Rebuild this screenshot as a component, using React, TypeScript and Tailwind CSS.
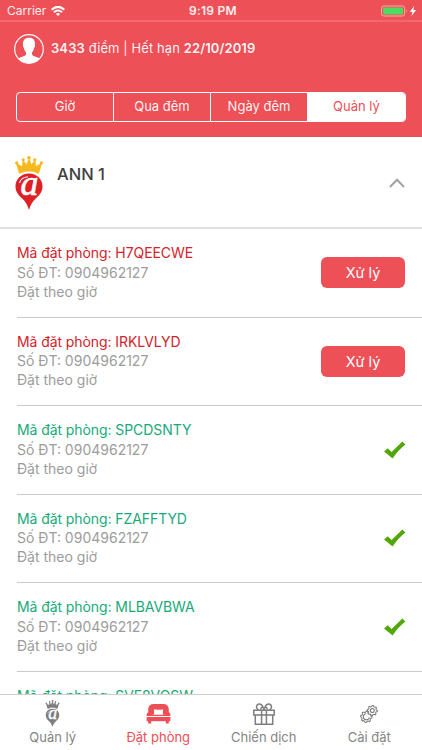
import React from "react";

type Booking = { code: string; done: boolean };

const bookings: Booking[] = [
  { code: "H7QEECWE", done: false },
  { code: "IRKLVLYD", done: false },
  { code: "SPCDSNTY", done: true },
  { code: "FZAFFTYD", done: true },
  { code: "MLBAVBWA", done: true },
  { code: "SVF8VQSW", done: true },
];

const segments = ["Giờ", "Qua đêm", "Ngày đêm", "Quản lý"];

function CrownPin({ crown, pin, className }: { crown: string; pin: string; className: string }) {
  return (
    <svg viewBox="0 0 28 54" className={className}>
      <path
        d="M4.4 17.4 L1.2 7.2 L7 10.4 L8.2 4.4 L11.6 8.8 L14 2.4 L16.4 8.8 L19.8 4.4 L21 10.4 L26.8 7.2 L23.6 17.4 Q14 12.8 4.4 17.4Z"
        fill={crown}
        stroke={crown}
        strokeWidth=".6"
      />
      <g fill={crown}>
        <circle cx="1.7" cy="6.8" r="1.6" />
        <circle cx="8.2" cy="3.8" r="1.6" />
        <circle cx="14" cy="1.8" r="1.8" />
        <circle cx="19.8" cy="3.8" r="1.6" />
        <circle cx="26.3" cy="6.8" r="1.6" />
      </g>
      <path
        d="M14 17.4 C6.2 17.4 .5 23 .5 30.4 C.5 35.9 3.6 39.1 7.2 42.4 C10.4 45.4 12.6 49 14 53.9 C15.4 49 17.6 45.4 20.8 42.4 C24.4 39.1 27.5 35.9 27.5 30.4 C27.5 23 21.8 17.4 14 17.4Z"
        fill={pin}
      />
      <text
        x="14.4"
        y="38.8"
        textAnchor="middle"
        fontFamily="Liberation Serif, serif"
        fontStyle="italic"
        fontWeight="400"
        fontSize="36"
        fill="#fff"
        stroke="#fff"
        strokeWidth=".6"
      >
        a
      </text>
      <path d="M4.4 27 Q6 21.4 13 20.8" fill="none" stroke="#fff" strokeWidth="1.1" />
    </svg>
  );
}

function StatusBar() {
  return (
    <div className="relative flex h-5 shrink-0 items-center justify-between pr-[5px] pl-[7px] text-[12px] leading-5 text-white/90">
      <div className="flex items-center gap-[5px] pt-[2px]">
        <span>Carrier</span>
        <svg viewBox="0 0 14 10" className="h-[10px] w-[14px]" fill="none" stroke="white" strokeWidth="2.1">
          <path d="M.7 3.7 Q7 -2 13.3 3.7" />
          <path d="M3 6.3 Q7 2.7 11 6.3" />
          <path d="M7 10 L4.9 7.9 Q7 6.2 9.1 7.9Z" fill="white" stroke="none" />
        </svg>
      </div>
      <span className="absolute top-[1px] left-[189px] font-semibold tracking-[0.25px] whitespace-nowrap">9:19 PM</span>
      <svg viewBox="0 0 36 12" className="mt-[1px] h-[12px] w-[36px]">
        <rect x=".6" y="1" width="23" height="10" rx="2.2" fill="none" stroke="#f8b09a" strokeWidth="1" />
        <rect x="2.2" y="2.6" width="19.8" height="6.8" rx=".8" fill="#4cd964" />
        <path d="M25 4.3 Q26.6 6 25 7.7Z" fill="#f8b09a" />
        <path d="M33.4 .8 L28.8 6.7 H31.6 L30.3 11.2 L35.2 5.1 H32.3Z" fill="white" />
      </svg>
    </div>
  );
}

function BookingRow({ code, done }: Booking) {
  return (
    <li className="ml-[17px] flex h-[88.5px] shrink-0 items-center justify-between border-b border-[#cbcbcb] pr-[17px] text-[14px] leading-[19.3px]">
      <div className="pb-[1px] whitespace-nowrap text-[#9c9c9c]">
        <p className={done ? "tracking-[-0.08px] text-[#18a97a]" : "tracking-[-0.08px] text-[#d3232c]"}>
          Mã đặt phòng: {code}
        </p>
        <p>Số ĐT: 0904962127</p>
        <p>Đặt theo giờ</p>
      </div>
      {done ? (
        <svg viewBox="0 0 22 18" className="-mr-[1px] h-[18px] w-[22px]">
          <path d="M0 10.6 L3.7 7.2 L7.6 11 L18.3 .4 L21.5 3.6 Q14 9.2 8.6 17.6Z" fill="#52a80b" />
        </svg>
      ) : (
        <button className="h-[31px] w-[84px] rounded-[6px] bg-[#ee5057] text-[14.5px] text-white">Xử lý</button>
      )}
    </li>
  );
}

function BedIcon() {
  return (
    <svg viewBox="0 0 25 20" className="h-5 w-[25px]" fill="#ee4e56">
      <path d="M2.2 10.8 V5.6 Q2.2 0 8 0 H17 Q22.8 0 22.8 5.6 V10.8Z" />
      <path d="M8 5.2 Q12.5 6.2 17 5.2 V11 H8Z" fill="#fff" />
      <path d="M2.6 8 Q5.6 8 6.2 10.8 H18.8 Q19.4 8 22.4 8 Q24.8 9 24.4 12 H.6 Q.2 9 2.6 8Z" />
      <path d="M.6 13 H24.4 V17.2 H.6Z" />
      <path d="M2.2 17 H5.2 V19.4 H2.2Z M19.8 17 H22.8 V19.4 H19.8Z" />
    </svg>
  );
}

function GiftIcon() {
  return (
    <svg viewBox="0 0 22 22" className="h-[22px] w-[22px]" fill="none" stroke="#7e7e7e" strokeWidth="1.5">
      <path d="M.8 7.2 H21.2 V12 H.8Z M2.3 12 V21.2 H19.7 V12 M8.6 7.2 V21 M13.4 7.2 V21" />
      <path d="M11 7 C10 2 7.4 .4 5.2 1.2 C2.6 2.4 3.2 5.8 5.5 7 M11 7 C12 2 14.6 .4 16.8 1.2 C19.4 2.4 18.8 5.8 16.5 7 M7.6 6.8 Q7.8 4.6 9.4 3.6 M14.4 6.8 Q14.2 4.6 12.6 3.6" />
    </svg>
  );
}

function Gear({ x, y, r }: { x: number; y: number; r: number }) {
  const points = Array.from({ length: 32 }, (_, i) => {
    const angle = (i * Math.PI) / 16;
    const radius = i % 4 < 2 ? r : r - 1.1;
    return `${(x + radius * Math.cos(angle)).toFixed(2)},${(y + radius * Math.sin(angle)).toFixed(2)}`;
  }).join(" ");
  return <polygon points={points} />;
}

function GearsIcon() {
  return (
    <svg viewBox="0 0 18 18" className="h-[18px] w-[18px]" fill="none" stroke="#7e7e7e" strokeWidth="1.05">
      <Gear x={6.3} y={11.8} r={5.7} />
      <path d="M6.3 8.8 A3 3 0 1 0 9.3 12.2" />
      <g fill="#fff">
        <Gear x={12.3} y={5.6} r={5.1} />
      </g>
      <circle cx="12.3" cy="5.6" r="2" />
    </svg>
  );
}

const tabs = [
  { label: "Quản lý", icon: <CrownPin crown="#7e7e7e" pin="#7e7e7e" className="h-[27px] w-[15px]" /> },
  { label: "Đặt phòng", icon: <BedIcon />, active: true },
  { label: "Chiến dịch", icon: <GiftIcon /> },
  { label: "Cài đặt", icon: <GearsIcon /> },
];

export default function App() {
  return (
    <div className="flex h-[750px] w-[422px] flex-col overflow-hidden bg-white font-['Inter','Noto_Sans',sans-serif]">
      <header className="flex h-[137px] shrink-0 flex-col border-b border-[#e0555b] bg-[#ee5057]">
        <StatusBar />
        <div className="flex h-[56px] items-center border-t-2 border-[#f26970] pl-[14px]">
          <svg viewBox="0 0 30 30" className="h-[30px] w-[30px]">
            <circle cx="15" cy="15" r="14.3" fill="none" stroke="#fff" strokeWidth="1.2" />
            <path
              d="M15 3.8 C10.7 3.8 8.6 6.5 9 11 Q8.6 12.8 9.7 13.5 Q10.3 17 12 18.4 V20.5 C10.5 23 6.5 22.5 4.2 24.8 Q8.5 29 15 29 Q21.5 29 25.8 24.8 C23.5 22.5 19.5 23 18 20.5 V18.4 Q19.7 17 20.3 13.5 Q21.4 12.8 21 11 C21.4 6.5 19.3 3.8 15 3.8Z"
              fill="#fff"
            />
          </svg>
          <p className="ml-[7px] text-[13px] tracking-[0.1px] whitespace-nowrap text-white/95">
            <b className="font-semibold">3433</b> điểm | Hết hạn <b className="font-semibold">22/10/2019</b>
          </p>
        </div>
        <div className="mt-4 ml-4 flex h-[30px] w-[390px] overflow-hidden rounded-[4px] border border-white">
          {segments.map((label, i) => (
            <button
              key={label}
              className={
                i === 3
                  ? "flex-1 bg-white text-[13px] text-[#ee5057]"
                  : "w-[97px] border-r border-white text-[13px] text-white/95"
              }
            >
              {label}
            </button>
          ))}
        </div>
      </header>

      <section className="flex h-[92px] shrink-0 items-start border-b-2 border-[#e0e0e0] pr-[17px] pl-[15px]">
        <CrownPin crown="#f6b81c" pin="#df2027" className="mt-[19px] h-[54px] w-[28px]" />
        <h2 className="mt-[25px] ml-[14px] text-[16.5px] leading-6 font-medium text-[#404040]">ANN 1</h2>
        <svg viewBox="0 0 16 10" className="mt-[41px] ml-auto h-[10px] w-4" fill="none" stroke="#a2a2a2" strokeWidth="2">
          <path d="M1 9 L8 1.8 L15 9" />
        </svg>
      </section>

      <ul className="flex min-h-0 flex-1 flex-col overflow-hidden">
        {bookings.map((booking) => (
          <BookingRow key={booking.code} {...booking} />
        ))}
      </ul>

      <nav className="grid h-[56px] shrink-0 grid-cols-4 border-t border-[#cfcfcf] bg-white">
        {tabs.map(({ label, icon, active }) => (
          <div key={label} className="flex flex-col items-center">
            <div className="flex h-[32px] items-center justify-center pt-[5px]">{icon}</div>
            <span
              className={
                active
                  ? "text-[13px] leading-[21px] text-[#ee4e56]"
                  : "text-[13px] leading-[21px] text-[#858585]"
              }
            >
              {label}
            </span>
          </div>
        ))}
      </nav>
    </div>
  );
}
